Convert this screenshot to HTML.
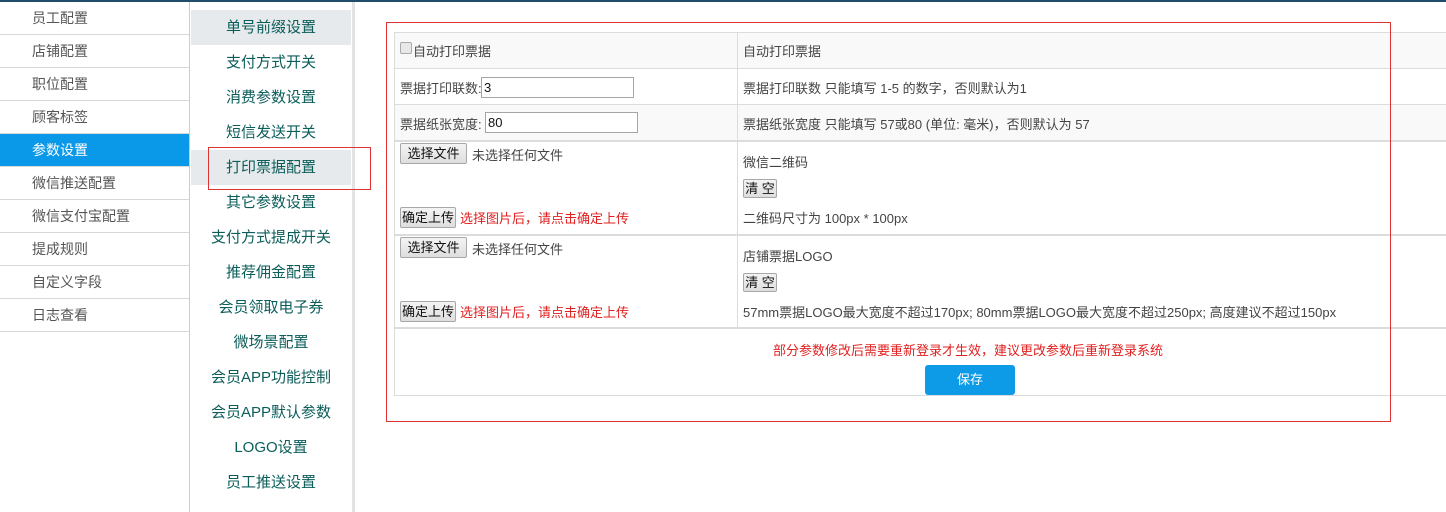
<!DOCTYPE html>
<html><head><meta charset="utf-8"><style>
*{margin:0;padding:0;box-sizing:border-box}
body{width:1446px;height:512px;overflow:hidden;background:#fff;font-family:"Liberation Sans","Noto Sans CJK SC",sans-serif;font-size:14px;color:#555;position:relative}
.a{position:absolute}
.top{left:0;top:0;width:1446px;height:2px;background:#1f4d6b}
.l1{left:0;width:189px;height:33px;border-bottom:1px solid #d8d8d8;line-height:32px;padding-left:32px;color:#555}
.act{background:#0a98e8;color:#fff}
.l2{left:191px;width:160px;height:35px;line-height:35px;text-align:center;color:#0b5d5a;font-size:15px}
.g{background:#e7eaec}
.cell{font-size:13px;color:#444}
.btn{position:absolute;border:1px solid #a8a8a8;background:linear-gradient(#f4f4f4,#dedede);border-radius:2px;font-size:13px;color:#111;text-align:center}
.inp{position:absolute;border:1px solid #a5a5a5;background:#fff;height:21px;font-size:13px;padding-left:2px;line-height:19px;color:#111}
.red{color:#e02020}
.hl{left:394px;width:1052px;background:#dcdcdc}
</style></head><body>
<div class="a top"></div>
<div class="a" style="left:189px;top:2px;width:1px;height:510px;background:#ccc"></div>
<div class="a" style="left:352px;top:2px;width:3px;height:510px;background:#e3e3e3"></div>

<div class="a l1" style="top:2px">员工配置</div>
<div class="a l1" style="top:35px">店铺配置</div>
<div class="a l1" style="top:68px">职位配置</div>
<div class="a l1" style="top:101px">顾客标签</div>
<div class="a l1 act" style="top:134px">参数设置</div>
<div class="a l1" style="top:167px">微信推送配置</div>
<div class="a l1" style="top:200px">微信支付宝配置</div>
<div class="a l1" style="top:233px">提成规则</div>
<div class="a l1" style="top:266px">自定义字段</div>
<div class="a l1" style="top:299px">日志查看</div>

<div class="a l2 g" style="top:10px">单号前缀设置</div>
<div class="a l2" style="top:45px">支付方式开关</div>
<div class="a l2" style="top:80px">消费参数设置</div>
<div class="a l2" style="top:115px">短信发送开关</div>
<div class="a l2 g" style="top:150px">打印票据配置</div>
<div class="a l2" style="top:185px">其它参数设置</div>
<div class="a l2" style="top:220px">支付方式提成开关</div>
<div class="a l2" style="top:255px">推荐佣金配置</div>
<div class="a l2" style="top:290px">会员领取电子券</div>
<div class="a l2" style="top:325px">微场景配置</div>
<div class="a l2" style="top:360px">会员APP功能控制</div>
<div class="a l2" style="top:395px">会员APP默认参数</div>
<div class="a l2" style="top:430px">LOGO设置</div>
<div class="a l2" style="top:465px">员工推送设置</div>
<div class="a" style="left:208px;top:147px;width:163px;height:43px;border:1px solid #d33"></div>

<!-- table -->
<div class="a" style="left:394px;top:32px;width:1052px;height:36px;background:#f9f9f9"></div>
<div class="a" style="left:394px;top:104px;width:1052px;height:36px;background:#f9f9f9"></div>
<div class="a hl" style="top:32px;height:1px"></div>
<div class="a hl" style="top:68px;height:1px"></div>
<div class="a hl" style="top:104px;height:1px"></div>
<div class="a hl" style="top:140px;height:2px"></div>
<div class="a hl" style="top:234px;height:2px"></div>
<div class="a hl" style="top:327px;height:2px"></div>
<div class="a hl" style="top:395px;height:1px"></div>
<div class="a" style="left:394px;top:32px;width:1px;height:364px;background:#dcdcdc"></div>
<div class="a" style="left:737px;top:32px;width:1px;height:296px;background:#dcdcdc"></div>

<div class="a" style="left:400px;top:42px;width:12px;height:12px;border:1px solid #aaa;border-radius:2px;background:#e8e8e8"></div>
<div class="a cell" style="left:413px;top:41px">自动打印票据</div>
<div class="a cell" style="left:743px;top:41px">自动打印票据</div>

<div class="a cell" style="left:400px;top:78px">票据打印联数:</div>
<div class="inp" style="left:481px;top:77px;width:153px">3</div>
<div class="a cell" style="left:743px;top:78px">票据打印联数 只能填写 1-5 的数字，否则默认为1</div>

<div class="a cell" style="left:400px;top:114px">票据纸张宽度:</div>
<div class="inp" style="left:485px;top:112px;width:153px">80</div>
<div class="a cell" style="left:743px;top:114px">票据纸张宽度 只能填写 57或80 (单位: 毫米)，否则默认为 57</div>

<div class="btn" style="left:400px;top:143px;width:67px;height:21px;line-height:19px">选择文件</div>
<div class="a cell" style="left:472px;top:145px">未选择任何文件</div>
<div class="btn" style="left:400px;top:207px;width:56px;height:21px;line-height:19px">确定上传</div>
<div class="a cell red" style="left:460px;top:208px">选择图片后，请点击确定上传</div>
<div class="a cell" style="left:743px;top:152px">微信二维码</div>
<div class="btn" style="left:743px;top:179px;width:34px;height:19px;line-height:17px">清 空</div>
<div class="a cell" style="left:743px;top:208px">二维码尺寸为 100px * 100px</div>

<div class="btn" style="left:400px;top:237px;width:67px;height:21px;line-height:19px">选择文件</div>
<div class="a cell" style="left:472px;top:239px">未选择任何文件</div>
<div class="btn" style="left:400px;top:301px;width:56px;height:21px;line-height:19px">确定上传</div>
<div class="a cell red" style="left:460px;top:302px">选择图片后，请点击确定上传</div>
<div class="a cell" style="left:743px;top:246px">店铺票据LOGO</div>
<div class="btn" style="left:743px;top:273px;width:34px;height:19px;line-height:17px">清 空</div>
<div class="a cell" style="left:743px;top:302px">57mm票据LOGO最大宽度不超过170px; 80mm票据LOGO最大宽度不超过250px; 高度建议不超过150px</div>

<div class="a cell red" style="left:773px;top:340px">部分参数修改后需要重新登录才生效，建议更改参数后重新登录系统</div>
<div class="a" style="left:925px;top:365px;width:90px;height:30px;background:#0d9be8;border-radius:3px;color:#fff;text-align:center;line-height:30px;font-size:13px">保存</div>

<div class="a" style="left:386px;top:22px;width:1005px;height:400px;border:1px solid #d33"></div>
</body></html>
